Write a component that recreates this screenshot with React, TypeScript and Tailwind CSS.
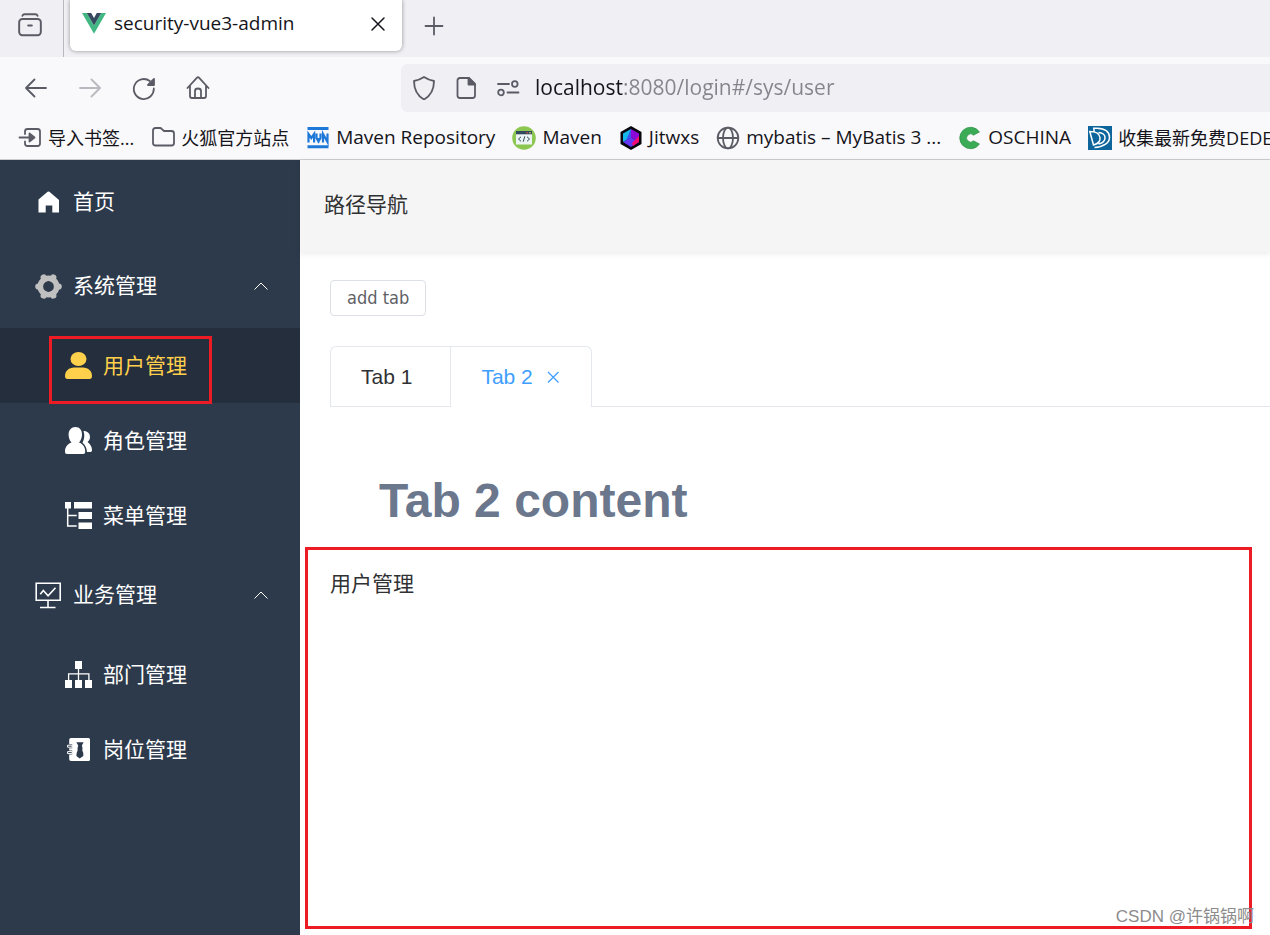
import React, { useState } from 'react';

interface MenuItem {
  label: string;
  icon: React.ReactNode;
}

interface MenuGroup extends MenuItem {
  children: MenuItem[];
}

const Icon: React.FC<{ children: React.ReactNode; className?: string }> = ({ children, className = '' }) => (
  <svg viewBox="0 0 27 27" className={`size-[27px] shrink-0 ${className}`} fill="currentColor" aria-hidden="true">
    {children}
  </svg>
);

const HomeFilledIcon = () => (
  <Icon>
    <path d="M12.6 2.8q.9-.7 1.8 0L24 11v12.6h-6.7v-7h-6.6v7H3.5V10.6z" />
  </Icon>
);

const SettingIcon = () => (
  <Icon className="text-[#c0c0c0]">
    <circle cx="13.5" cy="13.5" r="8.2" fill="none" stroke="currentColor" strokeWidth="5.600" />
    <path
      d="M22 13.500h1.700M5 13.500H3.300M17.500 6l.8-1.600M9.500 6l-.8-1.600M17.500 21l.8 1.600M9.500 21l-.8 1.600"
      stroke="currentColor"
      strokeWidth="6.200"
      strokeLinecap="round"
    />
  </Icon>
);

const UserIcon = () => (
  <Icon>
    <ellipse cx="13.500" cy="7" rx="8" ry="7" />
    <path d="M0 24c0-5 4-8.500 9-8.500h9c5 0 9 3.500 9 8.500 0 2-.8 3-2.500 3h-22C.8 27 0 26 0 24z" />
  </Icon>
);

const RoleIcon = () => (
  <Icon>
    <path d="M10.500 0c4.200 0 6.500 3.200 6.500 7.500 0 3.400-1.300 6.200-3 8 3.600 1.200 6.200 4.500 6.200 9 0 1.700-.6 2.500-2 2.500H2c-1.400 0-2-.8-2-2.500 0-4.500 2.800-7.800 6.500-9-1.800-1.800-2.900-4.600-2.900-8C3.600 3.200 6.300 0 10.500 0z" />
    <path d="M18.500 4c4 0 6.500 2.500 6.500 6 0 2.200-1 4-2.500 5 2.500 2 4.500 4.500 4.500 8 0 1.500-.7 2-2 2h-3c-.2-3.800-1.800-7.400-4.500-9.300C19.300 12.500 20 8 18.500 4z" />
  </Icon>
);

const TreeIcon = () => (
  <Icon>
    <path d="M0 0h6v6.500H0zM9 0h18v6.500H9zM13.500 10H27v7H13.500zM13.500 20.500H27V27H13.500z" />
    <path d="M2.700 6v18h9M2.700 13.600h9" fill="none" stroke="currentColor" strokeWidth="1.500" />
  </Icon>
);

const MonitorIcon = () => (
  <Icon>
    <path
      d="M1.200 1.200h24v17h-24zM13 18.200v7M5 25.500h15.500M5.300 12.300l3-3.800 4.800 5.300 7.400-8"
      fill="none"
      stroke="currentColor"
      strokeWidth="1.600"
    />
  </Icon>
);

const DeptIcon = () => (
  <Icon>
    <path d="M10 0h7v8h-7zM0 19h7v8H0zM10 19h7v8h-7zM20 19h7v8h-7z" />
    <path d="M13.500 7v12M3.600 19v-6.200h20.300V19" fill="none" stroke="currentColor" strokeWidth="1.300" />
  </Icon>
);

const PostIcon = () => (
  <Icon>
    <path
      fillRule="evenodd"
      d="M6 2h17.500Q25 2 25 3.500v20q0 1.500-1.500 1.500H6q-1.800 0-1.800-1.800V3.800Q4.200 2 6 2zM11.300 6.200l1.900 3.200q-1 2.600-.6 5-1.600 3-1.200 5.600l3.300 2.400 3.600-2.400q.6-3-1-5.600.6-2.500-.4-5l1.700-3.200z"
    />
    <path d="M2.800 10.200h4.400M2.800 16.600h4.400" stroke="#2d3a4b" strokeWidth="4" />
    <path d="M2.600 9.200h4.600v2H2.600zM2.600 15.600h4.600v2H2.600z" fill="none" stroke="currentColor" />
  </Icon>
);

const groups: MenuGroup[] = [
  {
    label: '系统管理',
    icon: <SettingIcon />,
    children: [
      { label: '用户管理', icon: <UserIcon /> },
      { label: '角色管理', icon: <RoleIcon /> },
      { label: '菜单管理', icon: <TreeIcon /> },
    ],
  },
  {
    label: '业务管理',
    icon: <MonitorIcon />,
    children: [
      { label: '部门管理', icon: <DeptIcon /> },
      { label: '岗位管理', icon: <PostIcon /> },
    ],
  },
];

const Line: React.FC<{ children: React.ReactNode; className?: string }> = ({ children, className = 'size-6' }) => (
  <svg
    viewBox="0 0 24 24"
    className={`shrink-0 ${className}`}
    fill="none"
    stroke="currentColor"
    strokeWidth="1.800"
    strokeLinecap="round"
    strokeLinejoin="round"
    aria-hidden="true"
  >
    {children}
  </svg>
);

const bookmarks: MenuItem[] = [
  {
    label: '导入书签...',
    icon: (
      <Line className="size-6 text-[#5b5b66]">
        <path d="M7 8V5.500Q7 3 9.500 3h10Q22 3 22 5.500v12q0 2.500-2.500 2.500h-10Q7 20 7 17.500v-2M1.500 11.500H12" />
        <path d="M11.500 7.500l5 4-5 4z" fill="currentColor" />
      </Line>
    ),
  },
  {
    label: '火狐官方站点',
    icon: (
      <Line className="size-6 text-[#5b5b66]">
        <path d="M2 4.500Q2 2 4.500 2H9q1 0 1.700.8L13 5h7.500Q23 5 23 7.500V17q0 2.500-2.500 2.500h-16Q2 19.500 2 17z" />
      </Line>
    ),
  },
  {
    label: 'Maven Repository',
    icon: (
      <svg viewBox="0 0 24 24" className="size-6 shrink-0" fill="none" stroke="#1e78d8" aria-hidden="true">
        <path d="M1.500 2.500h21M1.500 20.800h21" strokeWidth="3" />
        <path d="M2.500 16.500V8l2.800 4 2.800-4v8.500M10.500 7.500v4.500l2 3.500 2-3.500V7.500M12.500 12v4.500M17 16.500V8l4.500 8V7.500" strokeWidth="2.200" />
      </svg>
    ),
  },
  {
    label: 'Maven',
    icon: (
      <svg viewBox="0 0 24 24" className="size-6 shrink-0" aria-hidden="true">
        <circle cx="12" cy="12" r="11.800" fill="#8cc751" />
        <path d="M4 5.500h16v13H4z" fill="#edf4f4" />
        <path d="M4 5h16v3.300H4z" fill="#324a5e" />
        <circle cx="15" cy="6.700" r=".8" fill="#f1543f" />
        <circle cx="18" cy="6.700" r=".8" fill="#ffd05b" />
        <path d="M9 10.800L6.500 13 9 15.300M15 10.800l2.500 2.200-2.500 2.300M12.800 10.300l-1.600 5.500" fill="none" stroke="#324a5e" />
      </svg>
    ),
  },
  {
    label: 'Jitwxs',
    icon: (
      <svg viewBox="0 0 24 24" className="size-6 shrink-0" aria-hidden="true">
        <path d="M12 0l10.500 6v12L12 24 1.500 18V6z" fill="#07070d" />
        <path d="M12 3v8.500L4 16V7.500z" fill="#14b8e8" />
        <path d="M12 3l8 4.500V16l-8-4.500z" fill="#8a08d8" />
        <path d="M12 11.500l8 4.500-8 5-8-5z" fill="#6337f5" />
        <path d="M20 10v6l-6 4-1-3z" fill="#f50a75" />
        <path d="M12 3v8.500l-5 3z" fill="#3c50ee" />
      </svg>
    ),
  },
  {
    label: 'mybatis – MyBatis 3 ...',
    icon: (
      <Line className="size-6 text-[#5b5b66]">
        <circle cx="12" cy="12" r="10.300" />
        <ellipse cx="12" cy="12" rx="5" ry="10.300" />
        <path d="M2 12h20" />
      </Line>
    ),
  },
  {
    label: 'OSCHINA',
    icon: (
      <svg viewBox="0 0 24 24" className="size-6 shrink-0" aria-hidden="true">
        <path d="M21.500 6a10.800 10.800 0 1 0 0 12l-6-3.200a4 4 0 1 1 0-5.600z" fill="#3cab55" stroke="#258b3f" strokeWidth=".6" />
      </svg>
    ),
  },
  {
    label: '收集最新免费DEDE',
    icon: (
      <svg viewBox="0 0 24 24" className="size-6 shrink-0" fill="none" stroke="#fff" aria-hidden="true">
        <path d="M0 0h24v24H0z" fill="#0d659c" stroke="none" />
        <path d="M5 2.200h4c8 .3 12.500 3.800 12.500 9.300S15 21.200 6.500 21.500" strokeWidth="1.500" />
        <path d="M1.800 5.500L5.500 19c5.500-1.500 7-4 6.500-7.500S8.500 5.500 1.800 5.500zM6 2.200v3.500M10.500 6.500c4 .2 6.500 2.500 6.500 5.200s-2.500 5.300-6.500 6.300" strokeWidth="1.500" />
      </svg>
    ),
  },
];

const BrowserChrome = () => {
  const [url, setUrl] = useState('localhost:8080/login#/sys/user');

  return (
    <header className="border-b border-[#cccccf] bg-[#f9f9fb] font-['Open_Sans','Noto_Sans_CJK_SC',sans-serif] text-[#15141a]">
      <div className="flex h-[57px] items-start bg-[#f0eff4]">
        <button
          type="button"
          aria-label="Recent browsing"
          className="flex h-full w-16 items-center justify-center border-r border-[#b8b7bf] pr-1 pb-2 text-[#5b5b66]"
        >
          <Line className="size-[26px]">
            <rect x="2" y="6.500" width="20" height="15" rx="3" />
            <path d="M5 3.500q.5-1.500 2-1.500h10q1.500 0 2 1.500M10.300 12.500h3.400" />
          </Line>
        </button>
        <div className="ml-1.5 flex h-[51px] w-[332px] items-center rounded-b-md bg-white pr-4 pb-1 pl-3 shadow-[0_0_4px_rgba(0,0,0,0.4)]">
          <svg viewBox="0 0 24 21" className="h-[21px] w-6" aria-hidden="true">
            <path d="M0 0h4.800L12 12.400 19.200 0H24L12 20.700z" fill="#41b883" />
            <path d="M4.800 0h4.400L12 5l2.800-5h4.400L12 12.400z" fill="#35495e" />
          </svg>
          <span className="ml-2 flex-1 text-[19px]">security-vue3-admin</span>
          <button type="button" aria-label="Close tab">
            <Line className="size-4">
              <path d="M3 3l18 18m0-18L3 21" strokeWidth="2.200" />
            </Line>
          </button>
        </div>
        <button type="button" aria-label="New tab" className="ml-5 flex h-[51px] items-center text-[#5b5b66]">
          <Line>
            <path d="M12 3.500v17M3.500 12h17" />
          </Line>
        </button>
      </div>

      <div className="flex h-[61px] items-center text-[#5b5b66]">
        <nav className="flex w-[401px] shrink-0 gap-[30px] pl-6" aria-label="History">
          <button type="button" aria-label="Back">
            <Line>
              <path d="M22 12H2m8.500-8.500L2 12l8.500 8.500" />
            </Line>
          </button>
          <button type="button" aria-label="Forward" disabled>
            <Line className="size-6 opacity-40">
              <path d="M2 12h20m-8.500-8.500L22 12l-8.500 8.500" />
            </Line>
          </button>
          <button type="button" aria-label="Reload">
            <Line>
              <path d="M21.800 12.500a10 10 0 1 1-4-7.500" />
              <path d="M22 3v6h-6z" fill="currentColor" />
            </Line>
          </button>
          <button type="button" aria-label="Home">
            <Line>
              <path d="M1.500 12L10.800 1.800q1.200-1.200 2.400 0L22.500 12M4 9.500V20q0 2 2 2h12q2 0 2-2V9.500M9 22v-7q0-2.500 3-2.500t3 2.500v7" />
            </Line>
          </button>
        </nav>
        <div className="flex h-12 flex-1 items-center rounded-l-md bg-[#f0eff4] pl-[11px]">
          <Line>
            <path d="M12 1q4.500 3 10 4c0 8-3 14.500-10 18.500C5 19.500 2 13 2 5q5.500-1 10-4z" />
          </Line>
          <Line className="ml-[18px] size-6">
            <path d="M6 2h9l6 6v11.500q0 2.500-2.500 2.500H6q-2.500 0-2.500-2.500v-15Q3.500 2 6 2z" />
            <path d="M14.500 2v6.500H21z" fill="currentColor" />
          </Line>
          <Line className="ml-[18px] size-6">
            <path d="M2 8h11M11.500 16.500h11" />
            <circle cx="18.800" cy="8" r="2.800" />
            <circle cx="5" cy="16.500" r="2.800" />
          </Line>
          <input
            type="text"
            aria-label="Address"
            value={url}
            onChange={(e) => setUrl(e.target.value)}
            className="ml-[15px] min-w-0 flex-1 bg-linear-to-r from-[#15141a] from-[88px] to-[#85848c] to-[88px] bg-clip-text text-[21px] text-transparent outline-none"
          />
        </div>
      </div>

      <nav className="flex h-[41px] items-center gap-[17px] overflow-hidden pb-0.5 pl-[18px]" aria-label="Bookmarks">
        {bookmarks.map(({ label, icon }) => (
          <a
            key={label}
            href="#"
            className={`flex shrink-0 items-center gap-1.5 whitespace-nowrap ${
              /[\u4e00-\u9fff]/.test(label) ? 'text-lg' : 'text-[19px]'
            }`}
          >
            {icon}
            {label}
          </a>
        ))}
      </nav>
    </header>
  );
};

const Sidebar = () => {
  const [active, setActive] = useState('用户管理');
  const [closed, setClosed] = useState<string[]>([]);

  const toggle = (label: string) => {
    setClosed((prev) => (prev.includes(label) ? prev.filter((l) => l !== label) : [...prev, label]));
  };

  return (
    <nav className="w-[300px] shrink-0 bg-[#2d3a4b] text-[21px] text-white" aria-label="Menu">
      <a href="#" className="flex h-[84px] items-center gap-[7px] pl-[30px]">
        <span className="flex w-9 justify-center">
          <HomeFilledIcon />
        </span>
        首页
      </a>
      {groups.map((group) => (
        <div key={group.label}>
          <button
            type="button"
            className="flex h-[84px] w-full items-center gap-[7px] pr-[30px] pl-[30px]"
            onClick={() => toggle(group.label)}
          >
            <span className="flex w-9 justify-center">{group.icon}</span>
            <span className="flex-1 text-left">{group.label}</span>
            <svg viewBox="0 0 18 18" className="size-[18px]" fill="none" stroke="currentColor" aria-hidden="true">
              <path d="M2.500 12.500L9 6l6.500 6.500" />
            </svg>
          </button>
          {!closed.includes(group.label) &&
            group.children.map(({ label, icon }) => (
              <a
                key={label}
                href="#"
                onClick={() => setActive(label)}
                className={`relative flex h-[75px] items-center gap-[7px] pl-[60px] ${
                  active === label ? 'bg-[#252e3c] text-[#ffd04b]' : ''
                }`}
              >
                <span className="flex w-9 justify-center">{icon}</span>
                {label}
                {active === label && (
                  <span className="absolute top-2 -bottom-px left-[49px] w-[163px] border-3 border-[#ed1c24]" />
                )}
              </a>
            ))}
        </div>
      ))}
    </nav>
  );
};

const App = () => (
  <div className="flex min-h-screen flex-col bg-white font-['Liberation_Sans','Noto_Sans_CJK_SC',sans-serif]">
    <BrowserChrome />
    <div className="flex flex-1">
      <Sidebar />
      <main className="relative flex min-w-0 flex-1 flex-col text-[#303133]">
        <div className="flex h-[92px] items-center bg-[#f5f5f5] pb-0.5 pl-6 text-[21px] shadow-[0_2px_6px_rgba(0,0,0,0.08)]">
          路径导航
        </div>

        <div className="pt-7 pl-[30px]">
          <button
            type="button"
            className="block h-9 rounded border border-[#dcdfe6] px-4 font-['DejaVu_Sans_Condensed','Noto_Sans',sans-serif] text-lg text-[#606266]"
          >
            add tab
          </button>
          <div className="mt-[30px] flex text-[21px]" role="tablist">
            <button
              type="button"
              role="tab"
              aria-selected="false"
              className="h-[61px] rounded-tl-md border border-r-0 border-[#e4e7ed] pr-[38px] pl-[30px]"
            >
              Tab 1
            </button>
            <button
              type="button"
              role="tab"
              aria-selected="true"
              className="flex h-[61px] items-center gap-3 rounded-tr-md border border-b-0 border-[#e4e7ed] pr-[30px] pl-[30px] text-[#409eff]"
            >
              Tab 2
              <svg viewBox="0 0 16 16" className="size-4" fill="none" stroke="currentColor" strokeWidth="1.300" aria-hidden="true">
                <path d="M3 3l10.500 10.500m0-10.500L3 13.500" />
              </svg>
            </button>
            <div className="flex-1 border-b border-[#e4e7ed]" />
          </div>
          <h1 className="px-[49px] pt-16 pb-4 text-5xl leading-[60px] font-bold text-[#6b778c]">Tab 2 content</h1>
        </div>

        <section className="mr-[18px] mb-1.5 ml-[5px] flex-1 border-3 border-[#ed1c24] px-[22px] pt-5 text-[21px] leading-7">
          用户管理
        </section>

        <span className="absolute right-4 bottom-1.5 text-[17px] leading-6 text-[#8c8c8c]">CSDN @许锅锅啊</span>
      </main>
    </div>
  </div>
);

export default App;
